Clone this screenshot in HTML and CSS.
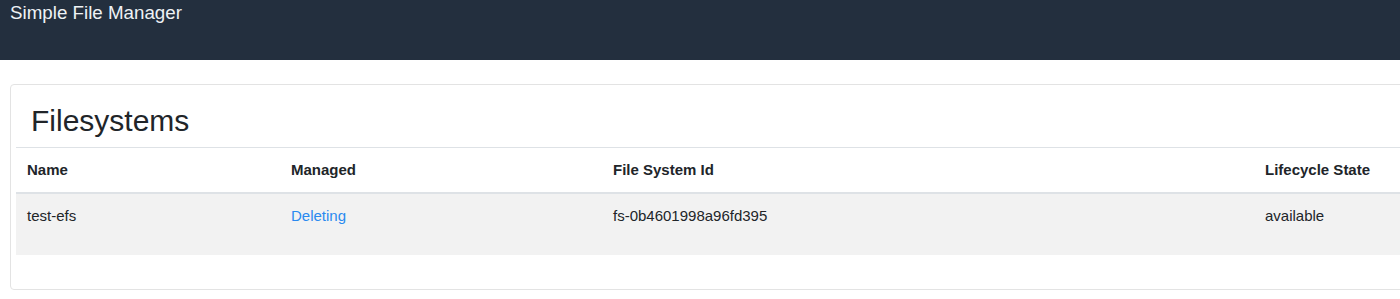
FILE: index.html
```html
<!DOCTYPE html>
<html>
<head>
<meta charset="utf-8">
<title>Simple File Manager</title>
<link rel="stylesheet" href="styles.css">
</head>
<body>
<header class="topbar">
  <span class="brand">Simple File Manager</span>
</header>
<main class="page">
  <section class="card">
    <h2 class="card-title">Filesystems</h2>
    <table class="fs-table">
      <thead>
        <tr>
          <th class="col-name">Name</th>
          <th class="col-managed">Managed</th>
          <th class="col-id">File System Id</th>
          <th class="col-state">Lifecycle State</th>
        </tr>
      </thead>
      <tbody>
        <tr>
          <td>test-efs</td>
          <td><a href="#" class="link">Deleting</a></td>
          <td>fs-0b4601998a96fd395</td>
          <td>available</td>
        </tr>
      </tbody>
    </table>
  </section>
</main>
</body>
</html>
```

FILE: styles.css
```css
html, body {
  margin: 0;
  padding: 0;
  overflow: hidden;
  background: #fff;
  font-family: "Liberation Sans", Arial, sans-serif;
  color: #212529;
}

.topbar {
  height: 60px;
  box-sizing: border-box;
  background: #232f3e;
  padding: 2px 10px 0;
}

.brand {
  color: #eef2f5;
  font-size: 18.75px;
  line-height: 22px;
}

.page {
  padding: 24px 0 0 10px;
}

.card {
  width: 1500px;
  box-sizing: border-box;
  border: 1px solid #e3e3e3;
  border-radius: 4px;
  padding: 5px;
}

.card-title {
  margin: 0;
  padding: 13px 15px 8px;
  font-size: 30px;
  line-height: 36px;
  font-weight: 400;
  color: #212529;
  border-bottom: 1px solid #dee2e6;
}

.fs-table {
  border-collapse: collapse;
  table-layout: fixed;
  width: 1488px;
  margin-bottom: 29px;
  font-size: 15px;
  line-height: 21px;
}

.fs-table th,
.fs-table td {
  text-align: left;
  vertical-align: top;
  padding: 11px 11px 12px;
}

.fs-table th {
  font-weight: 700;
  border-bottom: 2px solid #dee2e6;
}

.fs-table tbody tr {
  background: #f2f2f2;
  height: 62px;
}

.col-name { width: 242px; }
.col-managed { width: 300px; }
.col-id { width: 630px; }
.col-state { width: 228px; }

.link {
  color: #2a8af0;
  text-decoration: none;
}
```
